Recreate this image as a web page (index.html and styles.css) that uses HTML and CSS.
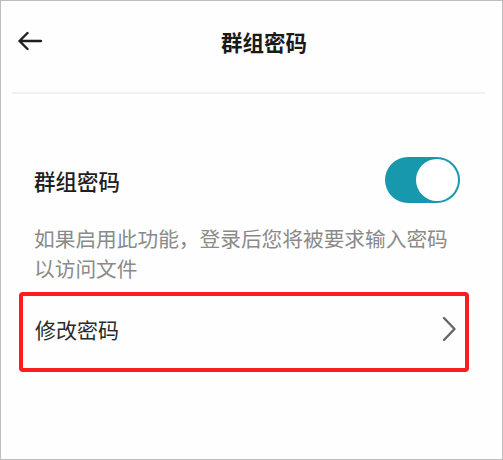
FILE: index.html
```html
<!DOCTYPE html>
<html>
<head>
  <meta charset="utf-8">
  <title>群组密码</title>
  <link rel="stylesheet" href="styles.css">
</head>
<body>
  <div class="screen">
    <header class="topbar">
      <svg class="back" width="25" height="20" viewBox="0 0 25 20">
        <path d="M24 10 H2.5 M10.5 2 L2.5 10 L10.5 18" fill="none" stroke="#1f1f1f" stroke-width="2.4" stroke-linecap="round" stroke-linejoin="round"/>
      </svg>
      <h1 class="title">群组密码</h1>
    </header>
    <div class="divider"></div>

    <section class="settings">
      <div class="toggle_row">
        <span class="label">群组密码</span>
        <span class="switch on"><span class="knob"></span></span>
      </div>
      <p class="hint">如果启用此功能，登录后您将被要求输入密码以访问文件</p>
    </section>

    <div class="link_row">
      <span class="link_label">修改密码</span>
      <svg class="chevron" width="16" height="28" viewBox="0 0 16 28">
        <path d="M3 3 L13.5 14 L3 25" fill="none" stroke="#666" stroke-width="2.4" stroke-linecap="round" stroke-linejoin="round"/>
      </svg>
    </div>
  </div>
</body>
</html>
```

FILE: styles.css
```css
* {
  box-sizing: border-box;
}

body {
  margin: 0;
  font-family: "Noto Sans CJK SC", "Noto Sans", sans-serif;
  background: #fff;
}

.screen {
  width: 503px;
  height: 460px;
  border: 1px solid #bdbdbd;
  background: #fefefe;
  overflow: hidden;
}

.topbar {
  display: flex;
  align-items: center;
  height: 80px;
  padding: 0 16px 0 16px;
}

.back {
  flex: none;
}

.title {
  flex: 1;
  margin: 0;
  text-align: center;
  font-size: 21.5px;
  font-weight: 700;
  color: #1a1a1a;
}

.divider {
  height: 2px;
  margin: 11px 17px 0 11px;
  background: #f1f1f1;
}

.settings {
  padding: 0 42px 0 33px;
}

.toggle_row {
  display: flex;
  align-items: center;
  justify-content: space-between;
  height: 46px;
  margin-top: 63px;
}

.label {
  font-size: 21.5px;
  font-weight: 500;
  color: #1e1e1e;
}

.switch {
  display: flex;
  align-items: center;
  justify-content: flex-end;
  width: 75px;
  height: 46px;
  padding: 2px;
  border-radius: 23px;
  background: #1898ad;
}

.knob {
  width: 42px;
  height: 42px;
  border-radius: 50%;
  background: #fff;
}

.hint {
  margin: 21px 0 0;
  font-size: 20.7px;
  line-height: 29.5px;
  color: #8a8a8a;
}

.link_row {
  display: flex;
  align-items: center;
  justify-content: space-between;
  height: 80px;
  margin: 9px 33px 0 18px;
  padding: 0 8px 7px 12px;
  border: 4px solid #ff1c1c;
  border-radius: 4px;
}

.link_label {
  font-size: 21px;
  color: #2a2a2a;
}
```
